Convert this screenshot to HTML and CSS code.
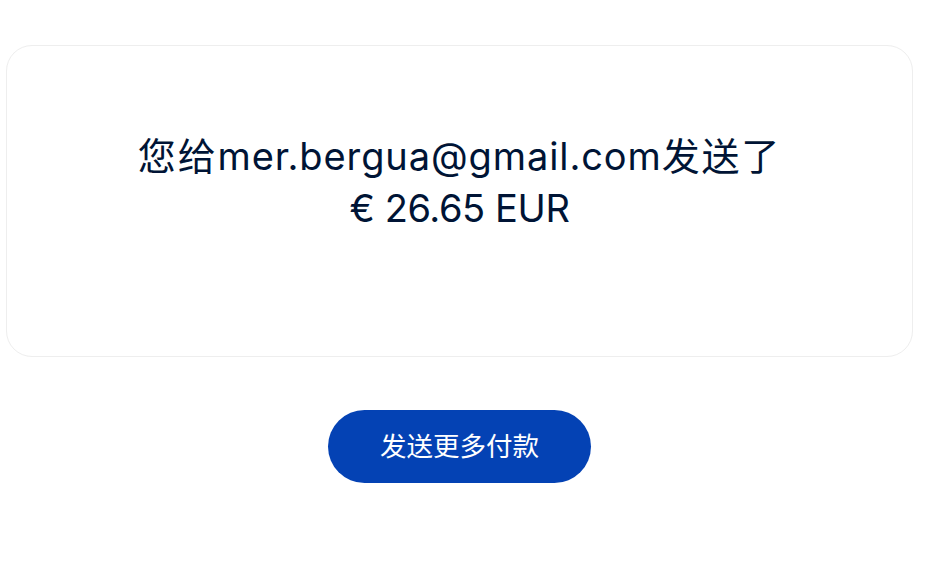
FILE: index.html
```html
<!DOCTYPE html>
<html lang="zh-CN">
<head>
    <meta charset="UTF-8">
    <meta name="viewport" content="width=device-width, initial-scale=1.0">
    <title>付款已发送</title>
    <link rel="stylesheet" href="styles.css">
</head>
<body>
    <div class="page">
        <div class="result-card">
            <h1 class="result-title">
                <span class="cjk">您给</span><span class="email">mer.bergua@gmail.com</span><span class="cjk">发送了</span><br>
                <span class="amount">€ 26.65 EUR</span>
            </h1>
        </div>
        <div class="actions">
            <a class="btn-primary" href="#">发送更多付款</a>
        </div>
    </div>
</body>
</html>
```

FILE: styles.css
```css
* {
    margin: 0;
    padding: 0;
    box-sizing: border-box;
}

body {
    background-color: #ffffff;
    font-family: Inter, "Noto Sans CJK SC", sans-serif;
    color: #001435;
}

.page {
    padding: 45px 25px 0 6px;
}

.result-card {
    height: 312px;
    border: 1px solid #eeeeee;
    border-radius: 26px;
    padding-top: 84px;
    text-align: center;
}

.result-title {
    font-size: 38px;
    font-weight: 400;
    line-height: 52px;
}

.result-title .cjk {
    letter-spacing: 1.8px;
}

.result-title .email {
    letter-spacing: 0.9px;
}

.result-title .amount {
    letter-spacing: -0.4px;
}

.actions {
    display: flex;
    justify-content: center;
    margin-top: 53px;
}

.btn-primary {
    display: inline-block;
    background-color: #0442b4;
    color: #ffffff;
    text-decoration: none;
    font-size: 26.5px;
    line-height: 73px;
    height: 73px;
    padding: 0 52px;
    border-radius: 40px;
}
```
